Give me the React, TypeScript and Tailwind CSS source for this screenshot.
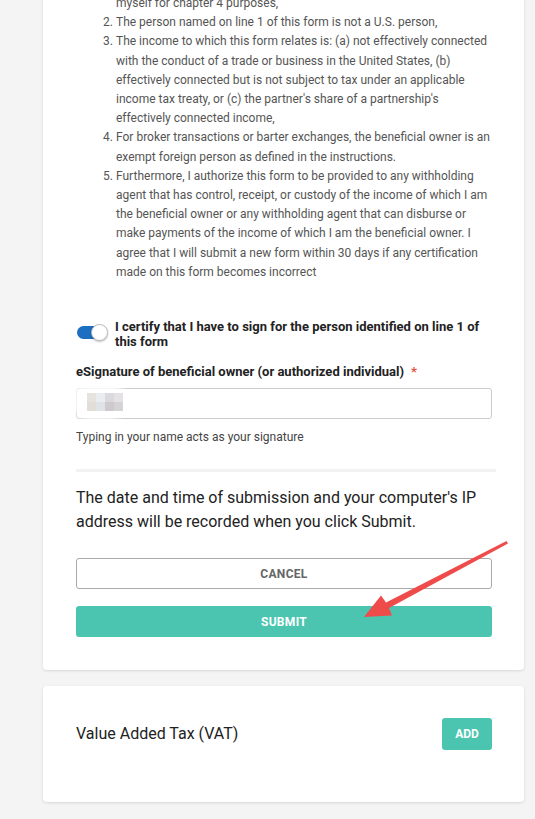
import React from "react";

const items = [
  "I am the individual that is the beneficial owner (or am authorized to sign for the individual that is the beneficial owner) of all the income or proceeds to which this form relates or am using this form to document myself for chapter 4 purposes,",
  "The person named on line 1 of this form is not a U.S. person,",
  "The income to which this form relates is: (a) not effectively connected with the conduct of a trade or business in the United States, (b) effectively connected but is not subject to tax under an applicable income tax treaty, or (c) the partner's share of a partnership's effectively connected income,",
  "For broker transactions or barter exchanges, the beneficial owner is an exempt foreign person as defined in the instructions.",
  "Furthermore, I authorize this form to be provided to any withholding agent that has control, receipt, or custody of the income of which I am the beneficial owner or any withholding agent that can disburse or make payments of the income of which I am the beneficial owner. I agree that I will submit a new form within 30 days if any certification made on this form becomes incorrect",
];

const mosaic = [
  "bg-[#e6e3df]", "bg-[#e9edf0]", "bg-[#dcd9dc]", "bg-[#e4e2e4]",
  "bg-[#e1ded9]", "bg-[#dfe2e6]", "bg-[#cdc9cd]", "bg-[#d6d3d6]",
];

export default function App() {
  return (
    <div
      className="relative h-[819px] w-[535px] overflow-hidden bg-[#f4f4f4] flex flex-col justify-end pb-[17px]"
      style={{ fontFamily: "Roboto, 'Liberation Sans', sans-serif" }}
    >
      {/* certification card */}
      <div className="shrink-0 ml-[43px] w-[481px] bg-white rounded-b shadow-[0_1px_3px_rgba(0,0,0,0.12)] pl-[33px] pr-[32px] pb-[33px]">
        <ol className="list-decimal pl-[40px] text-[12px] leading-[19.2px] text-[#555]">
          {items.map((t, i) => (
            <li key={i}>{t}</li>
          ))}
        </ol>

        <div className="mt-[37px] flex items-start">
          <div className="relative mt-[7px] ml-[1px] h-[13px] w-[30px] shrink-0 rounded-full bg-[#1b6ec2]">
            <div className="absolute -right-[1px] -top-[2px] h-[17px] w-[17px] rounded-full border border-[#bbb] bg-white shadow-[0_1px_2px_rgba(0,0,0,0.25)]" />
          </div>
          <p className="ml-[8px] text-[13px] leading-[15px] font-bold text-[#222]">
            I certify that I have to sign for the person identified on line 1 of this form
          </p>
        </div>

        <label className="mt-[15px] block text-[13px] leading-[16px] font-bold text-[#222]">
          eSignature of beneficial owner (or authorized individual)
          <span className="ml-[7px] text-[#e5533f]">*</span>
        </label>
        <div className="relative mt-[8px] h-[31px] rounded-[3px] border border-[#ccc] bg-white">
          <div className="absolute left-[-6px] top-[-8px] h-[40px] w-[55px] rounded-full bg-white/80 blur-[3px]" />
          <div className="absolute left-[10px] top-[4px] grid grid-cols-4">
            {mosaic.map((c, i) => (
              <div key={i} className={`h-[9px] w-[9px] ${c}`} />
            ))}
          </div>
        </div>
        <p className="mt-[10px] text-[12px] leading-[16px] text-[#444]">
          Typing in your name acts as your signature
        </p>

        <div className="mt-[24px] -mr-[4px] h-[3px] bg-[#f2f2f2]" />

        <p className="mt-[14px] text-[16px] leading-[24px] text-[#222]">
          The date and time of submission and your computer's IP address will be recorded when you click Submit.
        </p>

        <button className="mt-[24px] flex h-[31px] w-full items-center justify-center rounded-[3px] border border-[#aaa] bg-white text-[12px] font-bold tracking-[0.3px] text-[#666]">
          CANCEL
        </button>
        <button className="mt-[17px] flex h-[31px] w-full items-center justify-center rounded-[3px] bg-[#4bc5b0] text-[12px] font-bold tracking-[0.3px] text-white">
          SUBMIT
        </button>
      </div>

      {/* VAT card */}
      <div className="shrink-0 mt-[16px] ml-[43px] h-[116px] w-[481px] rounded bg-white pl-[33px] pr-[32px] pt-[32px] shadow-[0_1px_3px_rgba(0,0,0,0.12)]">
        <div className="flex items-center justify-between">
          <span className="text-[16px] text-[#222]">Value Added Tax (VAT)</span>
          <button className="flex h-[32px] w-[50px] items-center justify-center rounded-[3px] bg-[#4bc5b0] text-[12px] font-bold text-white">
            ADD
          </button>
        </div>
      </div>

      {/* annotation arrow */}
      <svg
        className="pointer-events-none absolute left-0 top-0"
        width="535"
        height="819"
        viewBox="0 0 535 819"
      >
        <polygon
          points="506.5,541 508,543.5 389,608 392,615.5 364,617 381,595.5 386,602.5"
          fill="#f04b4b"
        />
      </svg>
    </div>
  );
}
